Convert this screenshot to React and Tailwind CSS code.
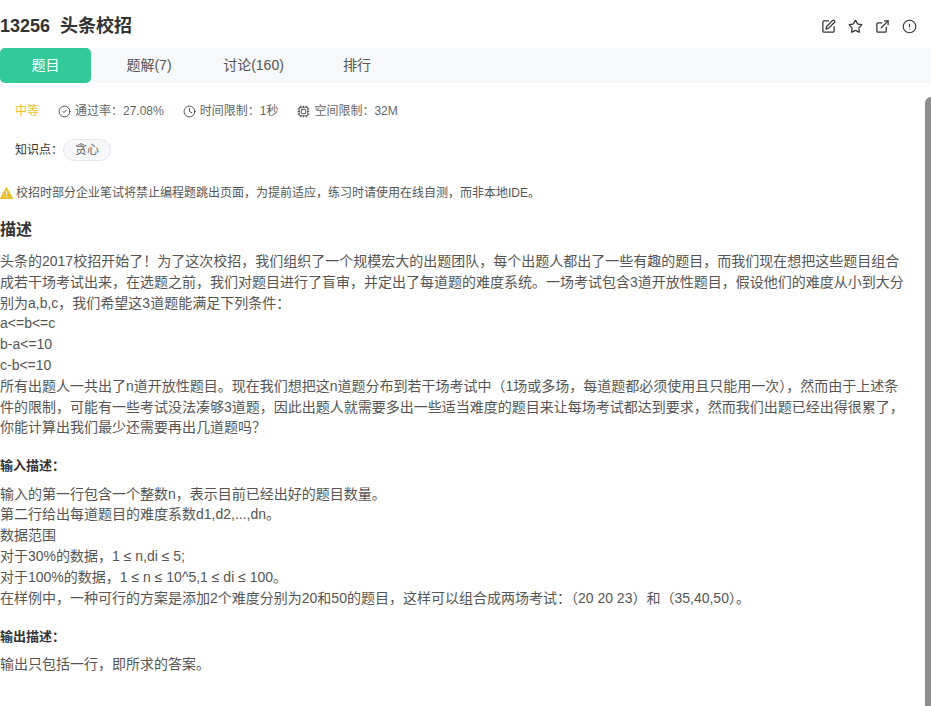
import { CircleCheck, Clock, Cpu, SquarePen, Star, ExternalLink, CircleAlert } from "lucide-react";

const font = { fontFamily: '"Liberation Sans", "Noto Sans CJK SC", sans-serif' };

function Stat({ icon: Icon, text }) {
  return (
    <span className="mr-[19px] flex items-center gap-[4px]">
      <Icon size={13} strokeWidth={1.7} className="text-[#444]" />
      <span>{text}</span>
    </span>
  );
}

function App() {
  return (
    <div style={font} className="relative h-[706px] w-[931px] overflow-hidden bg-white text-[#333]">
      <div className="flex h-12 items-center justify-between pt-[5px] pr-[14px]">
        <h1 className="text-[18px] font-bold text-[#333]">13256&nbsp;&nbsp;头条校招</h1>
        <div className="flex items-center gap-[12px] text-[#333]">
          <SquarePen size={15} strokeWidth={2} />
          <Star size={15} strokeWidth={2} />
          <ExternalLink size={15} strokeWidth={2} />
          <CircleAlert size={15} strokeWidth={1.8} />
        </div>
      </div>

      <div className="flex h-[35px] items-center bg-[#f7f8fa] text-[14px] text-[#555]">
        <div className="flex h-full w-[91px] items-center justify-center rounded-[5px] bg-[#32ca99] text-white">题目</div>
        <div className="w-[116px] text-center">题解(7)</div>
        <div className="w-[93px] text-center">讨论(160)</div>
        <div className="w-[114px] text-center">排行</div>
      </div>

      <div className="flex h-[54px] items-center pt-[2px] pl-[15px] text-[12px] text-[#666]">
        <span className="mr-[19px] text-[#f0c02a]">中等</span>
        <Stat icon={CircleCheck} text="通过率：27.08%" />
        <Stat icon={Clock} text="时间限制：1秒" />
        <Stat icon={Cpu} text="空间限制：32M" />
      </div>

      <div className="mt-[2px] flex items-center pl-[15px] text-[12px] text-[#333]">
        <span>知识点：</span>
        <span className="flex h-[22px] w-[48px] items-center justify-center rounded-full border border-[#e4e6eb] bg-[#f7f8fa] text-[#666]">贪心</span>
      </div>

      <div className="mt-[23px] flex items-center gap-[3px] text-[12px] text-[#555]">
        <svg width="13" height="12" viewBox="0 0 13 12">
          <path d="M6.5 0.5 L12.7 11.5 L0.3 11.5 Z" fill="#f0c02a" stroke="#f0c02a" strokeLinejoin="round" />
          <path d="M6.5 4 V7.6 M6.5 8.8 V10" stroke="#fff" strokeWidth="1.2" />
        </svg>
        <span>校招时部分企业笔试将禁止编程题跳出页面，为提前适应，练习时请使用在线自测，而非本地IDE。</span>
      </div>

      <h2 className="mt-[16px] text-[16px] font-bold text-[#333]">描述</h2>
      <div className="mt-[9px] w-[905px] text-[14px] leading-[20.8px] text-[#555]">
        <p>头条的2017校招开始了！为了这次校招，我们组织了一个规模宏大的出题团队，每个出题人都出了一些有趣的题目，而我们现在想把这些题目组合成若干场考试出来，在选题之前，我们对题目进行了盲审，并定出了每道题的难度系统。一场考试包含3道开放性题目，假设他们的难度从小到大分别为a,b,c，我们希望这3道题能满足下列条件：</p>
        <p>a&lt;=b&lt;=c</p>
        <p>b-a&lt;=10</p>
        <p>c-b&lt;=10</p>
        <p>所有出题人一共出了n道开放性题目。现在我们想把这n道题分布到若干场考试中（1场或多场，每道题都必须使用且只能用一次），然而由于上述条件的限制，可能有一些考试没法凑够3道题，因此出题人就需要多出一些适当难度的题目来让每场考试都达到要求，然而我们出题已经出得很累了，你能计算出我们最少还需要再出几道题吗？</p>
      </div>

      <h3 className="mt-[18px] text-[13px] font-bold text-[#333]">输入描述：</h3>
      <div className="mt-[8px] w-[905px] text-[14px] leading-[20.8px] text-[#555]">
        <p>输入的第一行包含一个整数n，表示目前已经出好的题目数量。</p>
        <p>第二行给出每道题目的难度系数d1,d2,...,dn。</p>
        <p>数据范围</p>
        <p>对于30%的数据，1 ≤ n,di ≤ 5;</p>
        <p>对于100%的数据，1 ≤ n ≤ 10^5,1 ≤ di ≤ 100。</p>
        <p>在样例中，一种可行的方案是添加2个难度分别为20和50的题目，这样可以组合成两场考试：（20 20 23）和（35,40,50）。</p>
      </div>

      <h3 className="mt-[19px] text-[13px] font-bold text-[#333]">输出描述：</h3>
      <p className="mt-[7px] text-[14px] leading-[20.8px] text-[#555]">输出只包括一行，即所求的答案。</p>

      <div className="absolute top-[97px] right-0 bottom-0 w-[6px] rounded-tl-[6px] bg-[#8e8e8e]" />
    </div>
  );
}

export default App;
